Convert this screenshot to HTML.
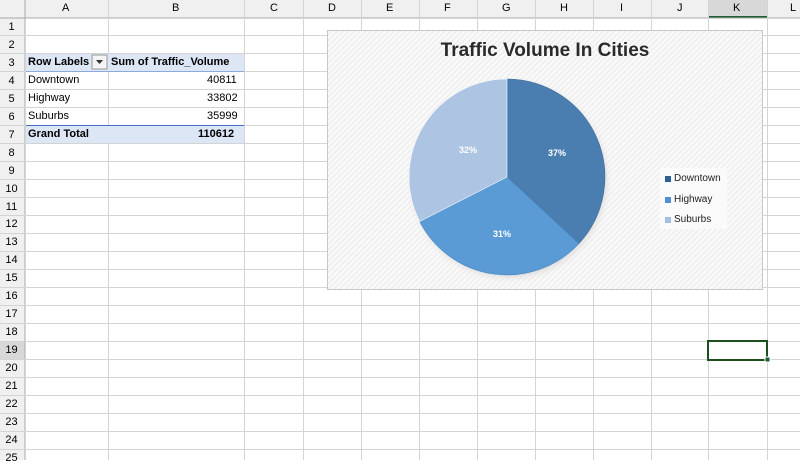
<!DOCTYPE html>
<html><head><style>
body{margin:0;width:800px;height:460px;overflow:hidden;background:#fff;font-family:"Liberation Sans",sans-serif;position:relative}
.t{position:absolute;font-size:11px;color:#000;white-space:nowrap}
</style></head><body>
<svg width="800" height="460" style="position:absolute;left:0;top:0">
<defs>
<pattern id="hatch" width="4" height="4" patternUnits="userSpaceOnUse" patternTransform="rotate(45)">
<rect width="4" height="4" fill="#f9f9f9"/><rect width="1.2" height="4" fill="#ececec"/></pattern>
<radialGradient id="sh"><stop offset="0.85" stop-color="#bbb" stop-opacity="0.8"/><stop offset="1" stop-color="#fff" stop-opacity="0"/></radialGradient>
</defs>
<rect x="0" y="0" width="800" height="18" fill="#f0f0f0"/>
<rect x="0" y="0" width="25" height="460" fill="#f0f0f0"/>
<rect x="708" y="0" width="59" height="18" fill="#d8d8d8"/>
<rect x="708" y="16" width="59" height="2" fill="#1e5e32"/>
<rect x="0" y="341" width="25" height="18" fill="#d8d8d8"/>
<line x1="0" y1="18" x2="800" y2="18" stroke="#a8a8a8"/>
<line x1="25" y1="0" x2="25" y2="460" stroke="#a8a8a8"/>
<g stroke="#d4d4d4" stroke-width="1">
<line x1="108.5" y1="0" x2="108.5" y2="460"/><line x1="244.5" y1="0" x2="244.5" y2="460"/>
<line x1="303.5" y1="0" x2="303.5" y2="460"/><line x1="361.5" y1="0" x2="361.5" y2="460"/>
<line x1="419.5" y1="0" x2="419.5" y2="460"/><line x1="477.5" y1="0" x2="477.5" y2="460"/>
<line x1="535.5" y1="0" x2="535.5" y2="460"/><line x1="593.5" y1="0" x2="593.5" y2="460"/>
<line x1="651.5" y1="0" x2="651.5" y2="460"/><line x1="708.5" y1="0" x2="708.5" y2="460"/>
<line x1="767.5" y1="0" x2="767.5" y2="460"/>
<line x1="0" y1="35.5" x2="800" y2="35.5"/><line x1="0" y1="53.5" x2="800" y2="53.5"/>
<line x1="0" y1="71.5" x2="800" y2="71.5"/><line x1="0" y1="89.5" x2="800" y2="89.5"/>
<line x1="0" y1="107.5" x2="800" y2="107.5"/><line x1="0" y1="125.5" x2="800" y2="125.5"/>
<line x1="0" y1="143.5" x2="800" y2="143.5"/><line x1="0" y1="161.5" x2="800" y2="161.5"/>
<line x1="0" y1="179.5" x2="800" y2="179.5"/><line x1="0" y1="197.5" x2="800" y2="197.5"/>
<line x1="0" y1="215.5" x2="800" y2="215.5"/><line x1="0" y1="233.5" x2="800" y2="233.5"/>
<line x1="0" y1="251.5" x2="800" y2="251.5"/><line x1="0" y1="269.5" x2="800" y2="269.5"/>
<line x1="0" y1="287.5" x2="800" y2="287.5"/><line x1="0" y1="305.5" x2="800" y2="305.5"/>
<line x1="0" y1="323.5" x2="800" y2="323.5"/><line x1="0" y1="341.5" x2="800" y2="341.5"/>
<line x1="0" y1="359.5" x2="800" y2="359.5"/><line x1="0" y1="377.5" x2="800" y2="377.5"/>
<line x1="0" y1="395.5" x2="800" y2="395.5"/><line x1="0" y1="413.5" x2="800" y2="413.5"/>
<line x1="0" y1="431.5" x2="800" y2="431.5"/><line x1="0" y1="449.5" x2="800" y2="449.5"/>
</g>
<rect x="26" y="54" width="218" height="17" fill="#dce6f4"/>
<rect x="26" y="126" width="218" height="17" fill="#dce6f4"/>
<line x1="26" y1="71.5" x2="244" y2="71.5" stroke="#8eaadb"/>
<line x1="26" y1="125.5" x2="244" y2="125.5" stroke="#4472c4"/>
<rect x="92" y="55" width="15" height="14" fill="#f4f4f4" stroke="#999"/>
<path d="M96 60 L103 60 L99.5 64 Z" fill="#333"/>
<rect x="327.5" y="30.5" width="435" height="259" fill="url(#hatch)" stroke="#c8c8c8"/>
<circle cx="509" cy="180" r="106" fill="url(#sh)"/>
<path d="M507 177 L507 79 A98 98 0 0 1 578.9 243.5 Z" fill="#4a7eb0" stroke="#3a6a9a" stroke-width="0.6"/>
<path d="M507 177 L578.9 243.5 A98 98 0 0 1 419.7 221.5 Z" fill="#5b9bd5" stroke="#4a88c0" stroke-width="0.6"/>
<path d="M507 177 L419.7 221.5 A98 98 0 0 1 507 79 Z" fill="#adc4e3" stroke="#fff" stroke-width="0.6"/>
<rect x="660" y="168" width="67" height="61" fill="#fafafa"/>
<rect x="665" y="176" width="6" height="6" fill="#2e5f95"/>
<rect x="665" y="197" width="6" height="6" fill="#4f91d0"/>
<rect x="665" y="217" width="6" height="6" fill="#a5bfe3"/>
<rect x="708" y="341" width="59" height="19" fill="none" stroke="#1e4e1e" stroke-width="2"/>
<rect x="765" y="357" width="5" height="5" fill="#1e5e32" stroke="#fff"/>
</svg>
<div class="t" style="left:62px;top:2px">A</div><div class="t" style="left:172px;top:2px">B</div>
<div class="t" style="left:270px;top:2px">C</div><div class="t" style="left:328px;top:2px">D</div>
<div class="t" style="left:386px;top:2px">E</div><div class="t" style="left:444px;top:2px">F</div>
<div class="t" style="left:502px;top:2px">G</div><div class="t" style="left:560px;top:2px">H</div>
<div class="t" style="left:620px;top:2px">I</div><div class="t" style="left:677px;top:2px">J</div>
<div class="t" style="left:733px;top:2px">K</div><div class="t" style="left:790px;top:2px">L</div>
<div style="position:absolute;left:0;top:19px;width:23px;font-size:11px;line-height:17.95px;text-align:center">1<br>2<br>3<br>4<br>5<br>6<br>7<br>8<br>9<br>10<br>11<br>12<br>13<br>14<br>15<br>16<br>17<br>18<br>19<br>20<br>21<br>22<br>23<br>24<br>25</div>
<div class="t" style="left:28px;top:56px;font-weight:bold">Row Labels</div>
<div class="t" style="left:111px;top:56px;font-weight:bold">Sum of Traffic_Volume</div>
<div class="t" style="left:28px;top:74px">Downtown</div><div class="t" style="left:207px;top:74px">40811</div>
<div class="t" style="left:28px;top:92px">Highway</div><div class="t" style="left:207px;top:92px">33802</div>
<div class="t" style="left:28px;top:110px">Suburbs</div><div class="t" style="left:207px;top:110px">35999</div>
<div class="t" style="left:28px;top:128px;font-weight:bold">Grand Total</div><div class="t" style="left:198px;top:128px;font-weight:bold">110612</div>
<div class="t" style="left:327px;width:436px;text-align:center;top:40px;font-size:19px;font-weight:bold;color:#2a2a2a">Traffic Volume In Cities</div>
<div class="t" style="left:548px;top:148px;font-size:9px;color:#fff;font-weight:bold">37%</div>
<div class="t" style="left:493px;top:229px;font-size:9px;color:#fff;font-weight:bold">31%</div>
<div class="t" style="left:459px;top:145px;font-size:9px;color:#fff;font-weight:bold">32%</div>
<div class="t" style="left:674px;top:173px;font-size:10px;color:#222">Downtown</div>
<div class="t" style="left:674px;top:194px;font-size:10px;color:#222">Highway</div>
<div class="t" style="left:674px;top:214px;font-size:10px;color:#222">Suburbs</div>
</body></html>
